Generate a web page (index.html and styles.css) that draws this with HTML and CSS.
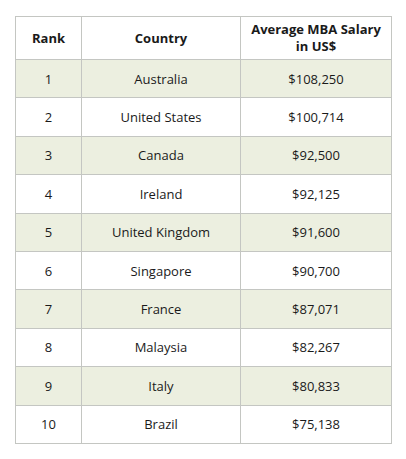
FILE: index.html
```html
<!DOCTYPE html>
<html>
<head>
<meta charset="utf-8">
<link rel="stylesheet" href="styles.css">
</head>
<body>
<div class="wrap">
<table class="salary">
<thead>
<tr><th class="c-rank">Rank</th><th class="c-country">Country</th><th class="c-salary">Average MBA Salary<br>in US$</th></tr>
</thead>
<tbody>
<tr class="alt"><td>1</td><td>Australia</td><td>$108,250</td></tr>
<tr><td>2</td><td>United States</td><td>$100,714</td></tr>
<tr class="alt"><td>3</td><td>Canada</td><td>$92,500</td></tr>
<tr><td>4</td><td>Ireland</td><td>$92,125</td></tr>
<tr class="alt"><td>5</td><td>United Kingdom</td><td>$91,600</td></tr>
<tr><td>6</td><td>Singapore</td><td>$90,700</td></tr>
<tr class="alt"><td>7</td><td>France</td><td>$87,071</td></tr>
<tr><td>8</td><td>Malaysia</td><td>$82,267</td></tr>
<tr class="alt"><td>9</td><td>Italy</td><td>$80,833</td></tr>
<tr><td>10</td><td>Brazil</td><td>$75,138</td></tr>
</tbody>
</table>
</div>
</body>
</html>
```
FILE: styles.css
```css
html, body {
  margin: 0;
  padding: 0;
  background: #ffffff;
}
.wrap {
  padding: 16px 0 0 15px;
}
.salary {
  border-collapse: collapse;
  table-layout: fixed;
  width: 377px;
  font-family: "Open Sans", "Noto Sans", sans-serif;
  font-size: 13px;
  color: #1a1a1a;
}
.salary th, .salary td {
  border: 1px solid #c4c6c2;
  text-align: center;
  padding: 0;
}
.salary th {
  height: 42px;
  font-weight: 700;
  line-height: 17px;
  background: #ffffff;
}
.salary td {
  height: 37.4px;
}
.c-rank { width: 65px; }
.c-country { width: 158px; }
.salary tr.alt td {
  background: #ecefe0;
}
.salary tbody tr:not(.alt) td {
  background: #ffffff;
}
```
